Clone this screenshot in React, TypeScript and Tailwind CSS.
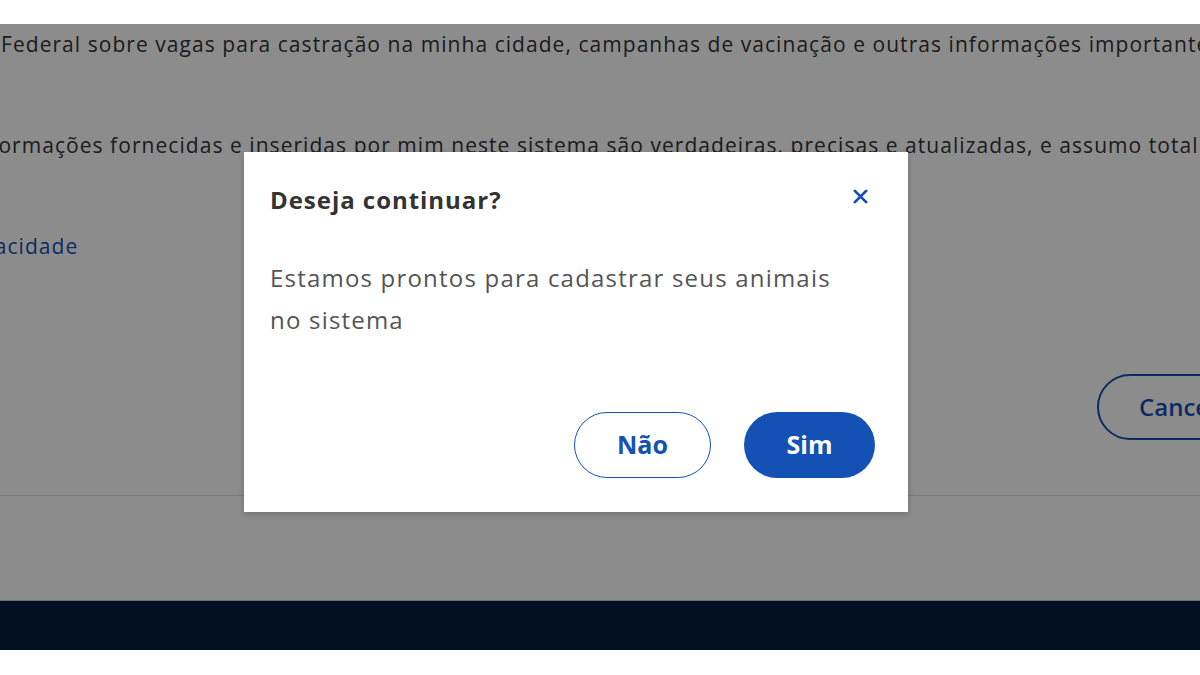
import React from 'react';

const font = { fontFamily: '"Open Sans", Lato, sans-serif' };

const Page: React.FC = () => {
  return (
    <div className="relative h-[626px] w-full overflow-hidden bg-white">
      <div className="flex h-full flex-col">
        <div className="flex-1 whitespace-nowrap text-[21px] tracking-[0.05em] text-[#333333]">
          <p className="mt-[8px] ml-[1px] leading-[24px]">
            Federal sobre vagas para castração na minha cidade, campanhas de vacinação e outras informações importantes.
          </p>
          <p className="mt-[77px] ml-[-30px] leading-[24px]">
            informações fornecidas e inseridas por mim neste sistema são verdadeiras, precisas e atualizadas, e assumo total responsabilidade
          </p>
          <p className="mt-[77px] ml-[-165px] leading-[24px] text-[#1351b4]">Política de Privacidade</p>
          <div className="mt-[116px] flex justify-end">
            <button className="mr-[-40px] h-[66px] w-[143px] rounded-full border-2 border-[#1351b4] pl-[40px] text-left text-[24px] font-semibold tracking-normal text-[#1351b4]">
              Cancelar
            </button>
          </div>
        </div>
        <div className="h-[105px] border-t border-[#dddddd]" />
        <div className="h-[50px] border-t border-[#cccccc] bg-[#071d41]" />
      </div>

      {/* overlay */}
      <div className="absolute inset-0 bg-black/45" />

      {/* modal */}
      <div className="absolute left-[244px] top-[128px] flex h-[360px] w-[664px] flex-col bg-white px-[26px] pt-[30px] shadow-[0_2px_6px_rgba(0,0,0,0.2)]">
        <div className="flex items-center justify-between">
          <h2 className="text-[24px] font-bold tracking-[0.04em] text-[#333333]">Deseja continuar?</h2>
          <button className="mr-[14px] mb-[8px] text-[#1351b4]">
            <svg width="15" height="15" viewBox="0 0 16 16" fill="none" stroke="currentColor" strokeWidth="3" strokeLinecap="round">
              <path d="M2 2l12 12M14 2L2 14" />
            </svg>
          </button>
        </div>
        <p className="mt-[39px] w-[585px] text-[24px] leading-[42px] tracking-[0.05em] text-[#555555]">
          Estamos prontos para cadastrar seus animais no sistema
        </p>
        <div className="mt-auto mb-[34px] flex justify-end gap-[33px] pr-[7px]">
          <button className="h-[66px] w-[137px] rounded-full border border-[#1351b4] text-[25px] font-bold text-[#1351b4]">
            Não
          </button>
          <button className="h-[66px] w-[131px] rounded-full bg-[#1351b4] text-[25px] font-bold text-white">
            Sim
          </button>
        </div>
      </div>
    </div>
  );
};

export default function App() {
  return (
    <div className="h-[675px] w-[1200px] bg-white pt-[24px]" style={font}>
      <Page />
    </div>
  );
}
